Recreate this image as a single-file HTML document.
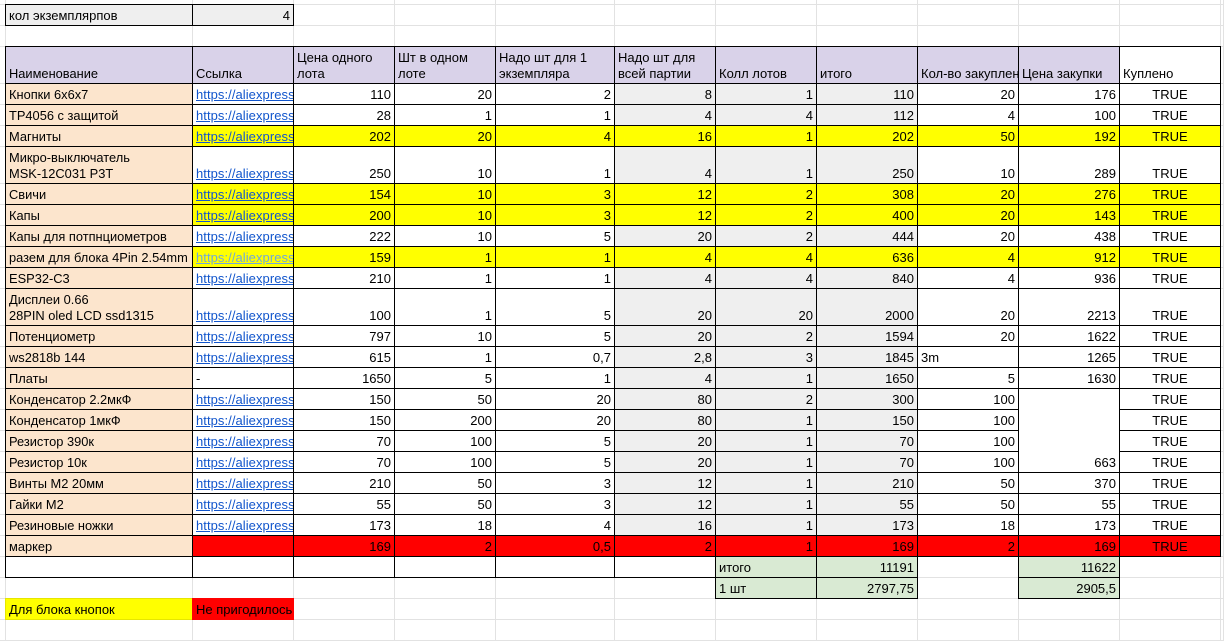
<!DOCTYPE html>
<html lang="ru">
<head>
<meta charset="utf-8">
<title>Таблица</title>
<style>
html,body{margin:0;padding:0;background:#fff;width:1224px;height:624px;overflow:hidden}
table{border-collapse:separate;border-spacing:0;table-layout:fixed;width:1224px;font:13px/16px "Liberation Sans",Arial,sans-serif;color:#000;position:absolute;left:0;top:0}
td{border:0;border-right:1px solid #e2e2e2;border-bottom:1px solid #e2e2e2;padding:0 3px 1px 3px;vertical-align:bottom;text-align:right;white-space:nowrap;box-sizing:border-box}
td:first-child,td:last-child{padding:0}
tr{height:21px}
tr.z{height:5px}
tr.t{height:37px}
.k,tr.d td:not(:first-child):not(:last-child){position:relative}
.k::after,tr.d td:not(:first-child):not(:last-child)::after{content:"";position:absolute;left:-1px;top:-1px;right:-1px;bottom:-1px;border:1px solid #000;z-index:1;pointer-events:none}
.l{text-align:left}
tr.d td:nth-child(2){text-align:left;background:#fce5cd;font-size:12.85px}
tr.d td:nth-child(3){text-align:left;padding-right:0}
tr.d td:nth-child(7),tr.d td:nth-child(8),tr.d td:nth-child(9){background:#efefef}
tr.d td:nth-last-child(2){text-align:center}
tr.y td:not(:first-child):not(:nth-child(2)):not(:last-child){background:#ff0}
tr.r td:not(:first-child):not(:nth-child(2)):not(:last-child){background:#f00}
tr.t td:not(:first-child):not(:last-child){background:#d9d2e9;text-align:left;white-space:normal}
tr.t td:nth-last-child(2){background:#fff!important;text-align:left!important}
tr.t td.o{white-space:nowrap!important;padding-right:0}
.o span{display:block;overflow:hidden}
a{color:#1155cc;text-decoration:underline;display:block;overflow:hidden;white-space:nowrap;letter-spacing:.06px}
a.p{color:#6fa8dc}
.g{background:#efefef}
.m{background:#d9ead3}
.m1{text-align:left}
.yy{background:#ff0;text-align:left;position:relative;border-color:#e6e600}
.rr{background:#f00;text-align:left;position:relative;border-color:#f00}
.yy::after,.rr::after{content:"";position:absolute;left:-1px;top:-1px;right:-1px;bottom:-1px;border:1px solid #e6e600}
.rr::after{border-color:#f00;left:-1px;right:-1px}
tr.d td.left{text-align:left!important}
</style>
</head>
<body>
<table>
<colgroup>
<col style="width:6px"><col style="width:187px"><col style="width:101px"><col style="width:101px"><col style="width:101px"><col style="width:119px"><col style="width:101px"><col style="width:101px"><col style="width:101px"><col style="width:101px"><col style="width:101px"><col style="width:101px"><col style="width:3px">
</colgroup>
<tr class="z"><td></td><td></td><td></td><td></td><td></td><td></td><td></td><td></td><td></td><td></td><td></td><td></td><td></td></tr>
<tr><td></td><td class="k g l">кол экземплярпов</td><td class="k g">4</td><td></td><td></td><td></td><td></td><td></td><td></td><td></td><td></td><td></td><td></td></tr>
<tr><td></td><td></td><td></td><td></td><td></td><td></td><td></td><td></td><td></td><td></td><td></td><td></td><td></td></tr>
<tr class="d t"><td></td><td>Наименование</td><td>Ссылка</td><td>Цена одного лота</td><td>Шт в одном лоте</td><td>Надо шт для 1 экземпляра</td><td>Надо шт для всей партии</td><td>Колл лотов</td><td>итого</td><td class="o"><span>Кол-во закупленных</span></td><td>Цена закупки</td><td>Куплено</td><td></td></tr>
<tr class="d"><td></td><td>Кнопки 6x6x7</td><td><a>https://aliexpress.ru/item/1005</a></td><td>110</td><td>20</td><td>2</td><td>8</td><td>1</td><td>110</td><td>20</td><td>176</td><td>TRUE</td><td></td></tr>
<tr class="d"><td></td><td>TP4056 с защитой</td><td><a>https://aliexpress.ru/item/1005</a></td><td>28</td><td>1</td><td>1</td><td>4</td><td>4</td><td>112</td><td>4</td><td>100</td><td>TRUE</td><td></td></tr>
<tr class="d y"><td></td><td>Магниты</td><td><a>https://aliexpress.ru/item/1005</a></td><td>202</td><td>20</td><td>4</td><td>16</td><td>1</td><td>202</td><td>50</td><td>192</td><td>TRUE</td><td></td></tr>
<tr class="d t2" style="height:37px"><td></td><td>Микро-выключатель<br>MSK-12C031 P3T</td><td><a>https://aliexpress.ru/item/1005</a></td><td>250</td><td>10</td><td>1</td><td>4</td><td>1</td><td>250</td><td>10</td><td>289</td><td>TRUE</td><td></td></tr>
<tr class="d y"><td></td><td>Свичи</td><td><a>https://aliexpress.ru/item/1005</a></td><td>154</td><td>10</td><td>3</td><td>12</td><td>2</td><td>308</td><td>20</td><td>276</td><td>TRUE</td><td></td></tr>
<tr class="d y"><td></td><td>Капы</td><td><a>https://aliexpress.ru/item/1005</a></td><td>200</td><td>10</td><td>3</td><td>12</td><td>2</td><td>400</td><td>20</td><td>143</td><td>TRUE</td><td></td></tr>
<tr class="d"><td></td><td>Капы для потпнциометров</td><td><a>https://aliexpress.ru/item/1005</a></td><td>222</td><td>10</td><td>5</td><td>20</td><td>2</td><td>444</td><td>20</td><td>438</td><td>TRUE</td><td></td></tr>
<tr class="d y"><td></td><td>разем для блока 4Pin 2.54mm</td><td><a class="p">https://aliexpress.ru/item/1005</a></td><td>159</td><td>1</td><td>1</td><td>4</td><td>4</td><td>636</td><td>4</td><td>912</td><td>TRUE</td><td></td></tr>
<tr class="d"><td></td><td>ESP32-C3</td><td><a>https://aliexpress.ru/item/1005</a></td><td>210</td><td>1</td><td>1</td><td>4</td><td>4</td><td>840</td><td>4</td><td>936</td><td>TRUE</td><td></td></tr>
<tr class="d" style="height:37px"><td></td><td>Дисплеи 0.66<br>28PIN oled LCD ssd1315</td><td><a>https://aliexpress.ru/item/1005</a></td><td>100</td><td>1</td><td>5</td><td>20</td><td>20</td><td>2000</td><td>20</td><td>2213</td><td>TRUE</td><td></td></tr>
<tr class="d"><td></td><td>Потенциометр</td><td><a>https://aliexpress.ru/item/1005</a></td><td>797</td><td>10</td><td>5</td><td>20</td><td>2</td><td>1594</td><td>20</td><td>1622</td><td>TRUE</td><td></td></tr>
<tr class="d"><td></td><td>ws2818b 144</td><td><a>https://aliexpress.ru/item/1005</a></td><td>615</td><td>1</td><td>0,7</td><td>2,8</td><td>3</td><td>1845</td><td class="left">3m</td><td>1265</td><td>TRUE</td><td></td></tr>
<tr class="d"><td></td><td>Платы</td><td>-</td><td>1650</td><td>5</td><td>1</td><td>4</td><td>1</td><td>1650</td><td>5</td><td>1630</td><td>TRUE</td><td></td></tr>
<tr class="d"><td></td><td>Конденсатор 2.2мкФ</td><td><a>https://aliexpress.ru/item/1005</a></td><td>150</td><td>50</td><td>20</td><td>80</td><td>2</td><td>300</td><td>100</td><td rowspan="4">663</td><td>TRUE</td><td></td></tr>
<tr class="d"><td></td><td>Конденсатор 1мкФ</td><td><a>https://aliexpress.ru/item/1005</a></td><td>150</td><td>200</td><td>20</td><td>80</td><td>1</td><td>150</td><td>100</td><td>TRUE</td><td></td></tr>
<tr class="d"><td></td><td>Резистор 390к</td><td><a>https://aliexpress.ru/item/1005</a></td><td>70</td><td>100</td><td>5</td><td>20</td><td>1</td><td>70</td><td>100</td><td>TRUE</td><td></td></tr>
<tr class="d"><td></td><td>Резистор 10к</td><td><a>https://aliexpress.ru/item/1005</a></td><td>70</td><td>100</td><td>5</td><td>20</td><td>1</td><td>70</td><td>100</td><td>TRUE</td><td></td></tr>
<tr class="d"><td></td><td>Винты М2 20мм</td><td><a>https://aliexpress.ru/item/1005</a></td><td>210</td><td>50</td><td>3</td><td>12</td><td>1</td><td>210</td><td>50</td><td>370</td><td>TRUE</td><td></td></tr>
<tr class="d"><td></td><td>Гайки М2</td><td><a>https://aliexpress.ru/item/1005</a></td><td>55</td><td>50</td><td>3</td><td>12</td><td>1</td><td>55</td><td>50</td><td>55</td><td>TRUE</td><td></td></tr>
<tr class="d"><td></td><td>Резиновые ножки</td><td><a>https://aliexpress.ru/item/1005</a></td><td>173</td><td>18</td><td>4</td><td>16</td><td>1</td><td>173</td><td>18</td><td>173</td><td>TRUE</td><td></td></tr>
<tr class="d r"><td></td><td>маркер</td><td></td><td>169</td><td>2</td><td>0,5</td><td>2</td><td>1</td><td>169</td><td>2</td><td>169</td><td>TRUE</td><td></td></tr>
<tr><td></td><td class="k"></td><td class="k"></td><td class="k"></td><td class="k"></td><td class="k"></td><td class="k"></td><td class="k m m1">итого</td><td class="k m">11191</td><td></td><td class="k m">11622</td><td></td><td></td></tr>
<tr><td></td><td></td><td></td><td></td><td></td><td></td><td></td><td class="k m m1">1 шт</td><td class="k m">2797,75</td><td></td><td class="k m">2905,5</td><td></td><td></td></tr>
<tr><td></td><td class="yy">Для блока кнопок</td><td class="rr">Не пригодилось</td><td></td><td></td><td></td><td></td><td></td><td></td><td></td><td></td><td></td><td></td></tr>
<tr><td></td><td></td><td></td><td></td><td></td><td></td><td></td><td></td><td></td><td></td><td></td><td></td><td></td></tr>
</table>
</body>
</html>
